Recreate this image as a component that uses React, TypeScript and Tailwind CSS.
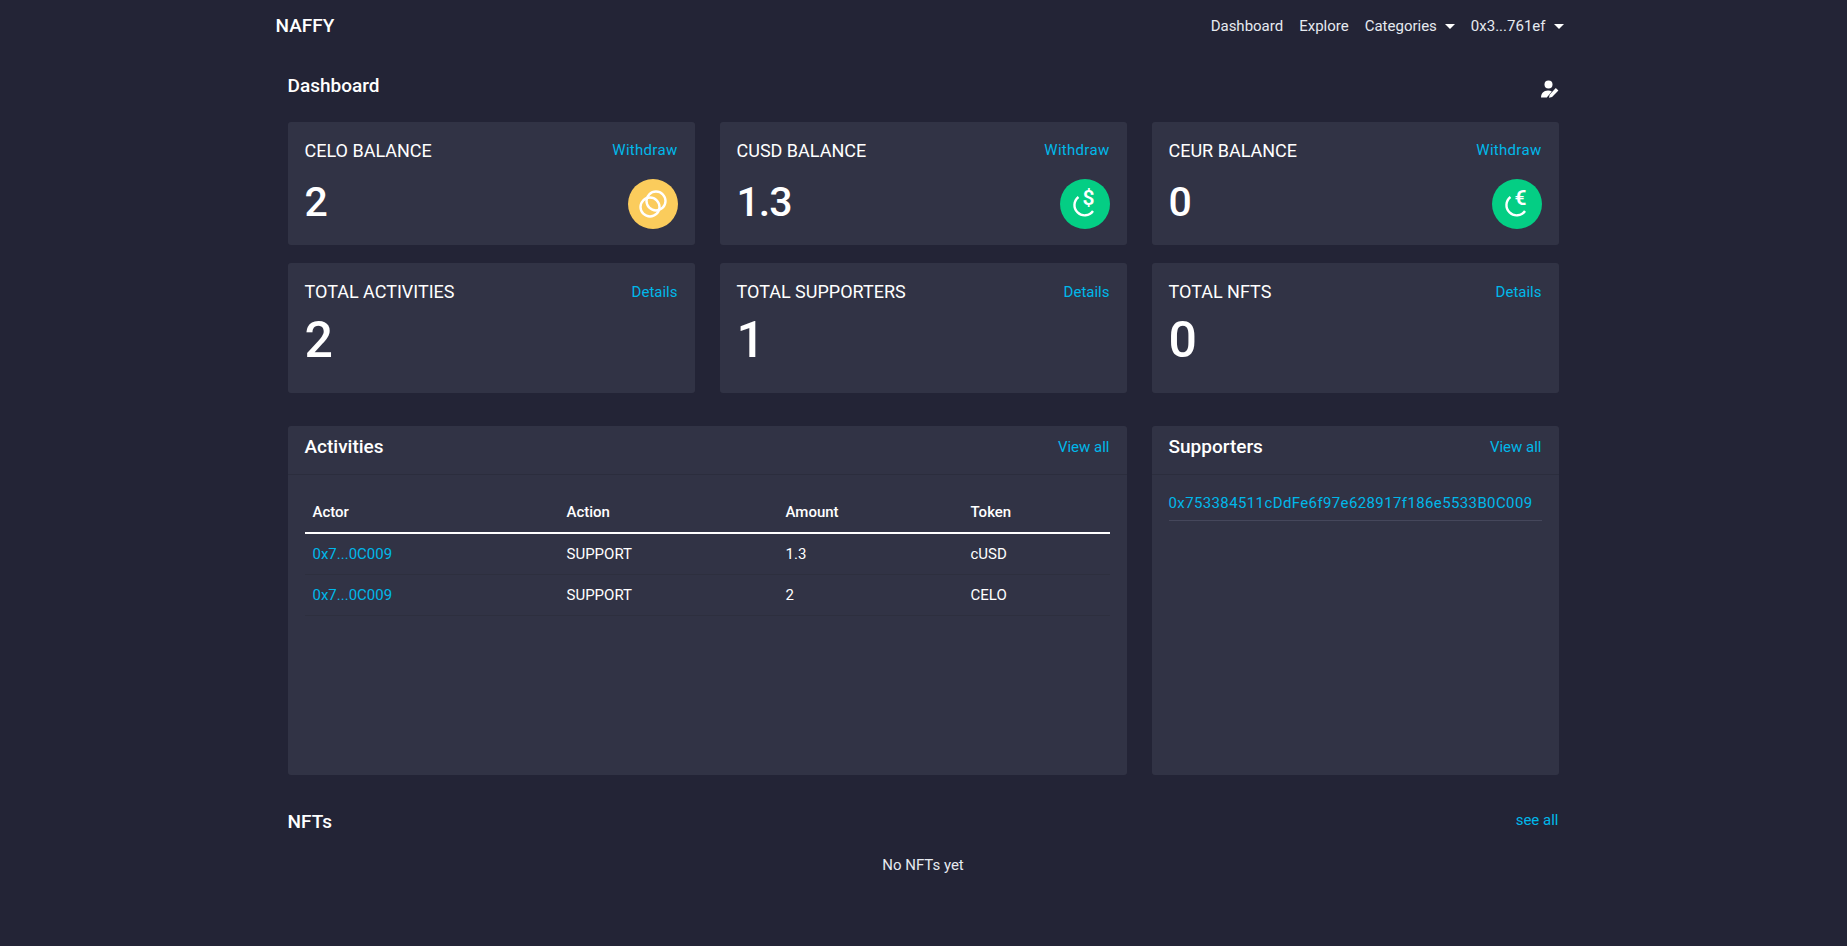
import React from "react";

const Coin = ({ bg, children }: { bg: string; children: React.ReactNode }) => (
  <div className={`w-[50px] h-[50px] rounded-full flex items-center justify-center ${bg}`}>{children}</div>
);

const CeloIcon = () => (
  <svg width="30" height="30" viewBox="0 0 30 30" fill="none" stroke="white" strokeWidth="2.4">
    <circle cx="18" cy="12" r="9.5" />
    <circle cx="12" cy="18" r="9.5" />
  </svg>
);

const StableIcon = ({ glyph }: { glyph: string }) => (
  <div className="relative w-[30px] h-[30px]">
    <svg width="30" height="30" viewBox="0 0 30 30" fill="none" stroke="white" strokeWidth="2.4">
      <path d="M8.5 8 A 10.2 10.2 0 1 0 23 22" />
    </svg>
    <span className="absolute left-[10px] top-[-2px] w-[18px] text-center text-white text-[21px] leading-[22px] font-semibold">{glyph}</span>
  </div>
);

const EditUser = () => (
  <svg width="19" height="18" viewBox="0 0 19 18" fill="white">
    <circle cx="8.5" cy="4.5" r="4" />
    <path d="M1 17.5c0-4 2.5-7 7-7 1.5 0 2.8.3 3.8.9L6.8 17.5z" />
    <path d="M9 17.7l.6-3L15.8 8l2.6 2.4-6.3 6.6z" />
  </svg>
);

const Caret = () => (
  <span className="inline-block ml-[8px] w-0 h-0 align-middle border-x-[5px] border-x-transparent border-t-[5px] border-t-white" />
);

const StatCard = ({ title, value, icon }: { title: string; value: string; icon: React.ReactNode }) => (
  <div className="bg-[#313345] rounded-[3px] h-[123px] px-[17px] pt-[16px]">
    <div className="flex justify-between items-center h-[24px]">
      <span className="text-[18px] text-white">{title}</span>
      <a className="text-[15px] text-[#00b8ea] tracking-[0.3px] pt-[1px]">Withdraw</a>
    </div>
    <div className="flex justify-between items-center mt-[17px] h-[50px]">
      <span className="text-[41px] font-medium text-white tracking-[-1px] pb-[2px]">{value}</span>
      {icon}
    </div>
  </div>
);

const TotalCard = ({ title, value }: { title: string; value: string }) => (
  <div className="bg-[#313345] rounded-[3px] h-[130px] px-[17px] pt-[16px]">
    <div className="flex justify-between items-center h-[24px]">
      <span className="text-[18px] text-white">{title}</span>
      <a className="text-[15px] text-[#00b8ea] pt-[2px]">Details</a>
    </div>
    <div className="mt-[12px] h-[50px] flex items-center">
      <span className="text-[50px] font-medium text-white">{value}</span>
    </div>
  </div>
);

const PanelHeader = ({ title }: { title: string }) => (
  <div className="h-[49px] px-[17px] pb-[5px] flex justify-between items-center border-b border-[#2b2d3d]">
    <h2 className="text-[19px] font-medium text-white">{title}</h2>
    <a className="text-[15px] text-[#00b8ea]">View all</a>
  </div>
);

const rows = [
  { amount: "1.3", token: "cUSD" },
  { amount: "2", token: "CELO" },
];

export default function App() {
  return (
    <div className="min-h-[946px] bg-[#232436] text-white font-['Roboto',sans-serif]">
      <nav className="w-[1300px] mx-auto h-[52px] flex items-center justify-between pl-[2px] pr-[10px]">
        <span className="text-[19px] font-medium">NAFFY</span>
        <div className="flex items-center gap-[16px] text-[15px] text-[#e6eaf0]">
          <span>Dashboard</span>
          <span>Explore</span>
          <span>Categories<Caret /></span>
          <span>0x3...761ef<Caret /></span>
        </div>
      </nav>
      <main className="w-[1271px] ml-[287.5px]">
        <div className="flex justify-between items-center h-[70px] pb-[2px]">
          <h1 className="text-[19px] font-medium">Dashboard</h1>
          <div className="pt-[6px]"><EditUser /></div>
        </div>
        <div className="grid grid-cols-3 gap-x-[25px] gap-y-[18px]">
          <StatCard title="CELO BALANCE" value="2" icon={<Coin bg="bg-[#fbcc5c]"><CeloIcon /></Coin>} />
          <StatCard title="CUSD BALANCE" value="1.3" icon={<Coin bg="bg-[#04ce84]"><StableIcon glyph="$" /></Coin>} />
          <StatCard title="CEUR BALANCE" value="0" icon={<Coin bg="bg-[#04ce84]"><StableIcon glyph="€" /></Coin>} />
          <TotalCard title="TOTAL ACTIVITIES" value="2" />
          <TotalCard title="TOTAL SUPPORTERS" value="1" />
          <TotalCard title="TOTAL NFTS" value="0" />
        </div>
        <div className="grid grid-cols-3 gap-x-[25px] mt-[33px]">
          <section className="col-span-2 bg-[#313345] rounded-[3px] h-[349px]">
            <PanelHeader title="Activities" />
            <div className="px-[17px] pt-[17px]">
              <div className="grid grid-cols-[254px_219px_185px_1fr] h-[42px] items-center border-b-2 border-white px-[8px] text-[15px] font-medium">
                <span>Actor</span>
                <span>Action</span>
                <span>Amount</span>
                <span>Token</span>
              </div>
              {rows.map((row, i) => (
                <div key={i} className="grid grid-cols-[254px_219px_185px_1fr] h-[41px] items-center border-b border-[#2d2f3e] px-[8px] text-[15px]">
                  <a className="text-[#00b8ea]">0x7...0C009</a>
                  <span>SUPPORT</span>
                  <span>{row.amount}</span>
                  <span>{row.token}</span>
                </div>
              ))}
            </div>
          </section>
          <section className="bg-[#313345] rounded-[3px] h-[349px]">
            <PanelHeader title="Supporters" />
            <div className="px-[17px] pt-[11px]">
              <div className="h-[35px] flex items-center border-b border-[#45475b] text-[15px] tracking-[0.38px] text-[#00b8ea] whitespace-nowrap">
                0x753384511cDdFe6f97e628917f186e5533B0C009
              </div>
            </div>
          </section>
        </div>
        <div className="flex justify-between items-center mt-[31px] h-[32px]">
          <h2 className="text-[19px] font-medium">NFTs</h2>
          <a className="text-[15px] text-[#00b8ea] pb-[4px]">see all</a>
        </div>
        <p className="text-center text-[15px] text-[#e6eaf0] mt-[16px]">No NFTs yet</p>
      </main>
    </div>
  );
}
